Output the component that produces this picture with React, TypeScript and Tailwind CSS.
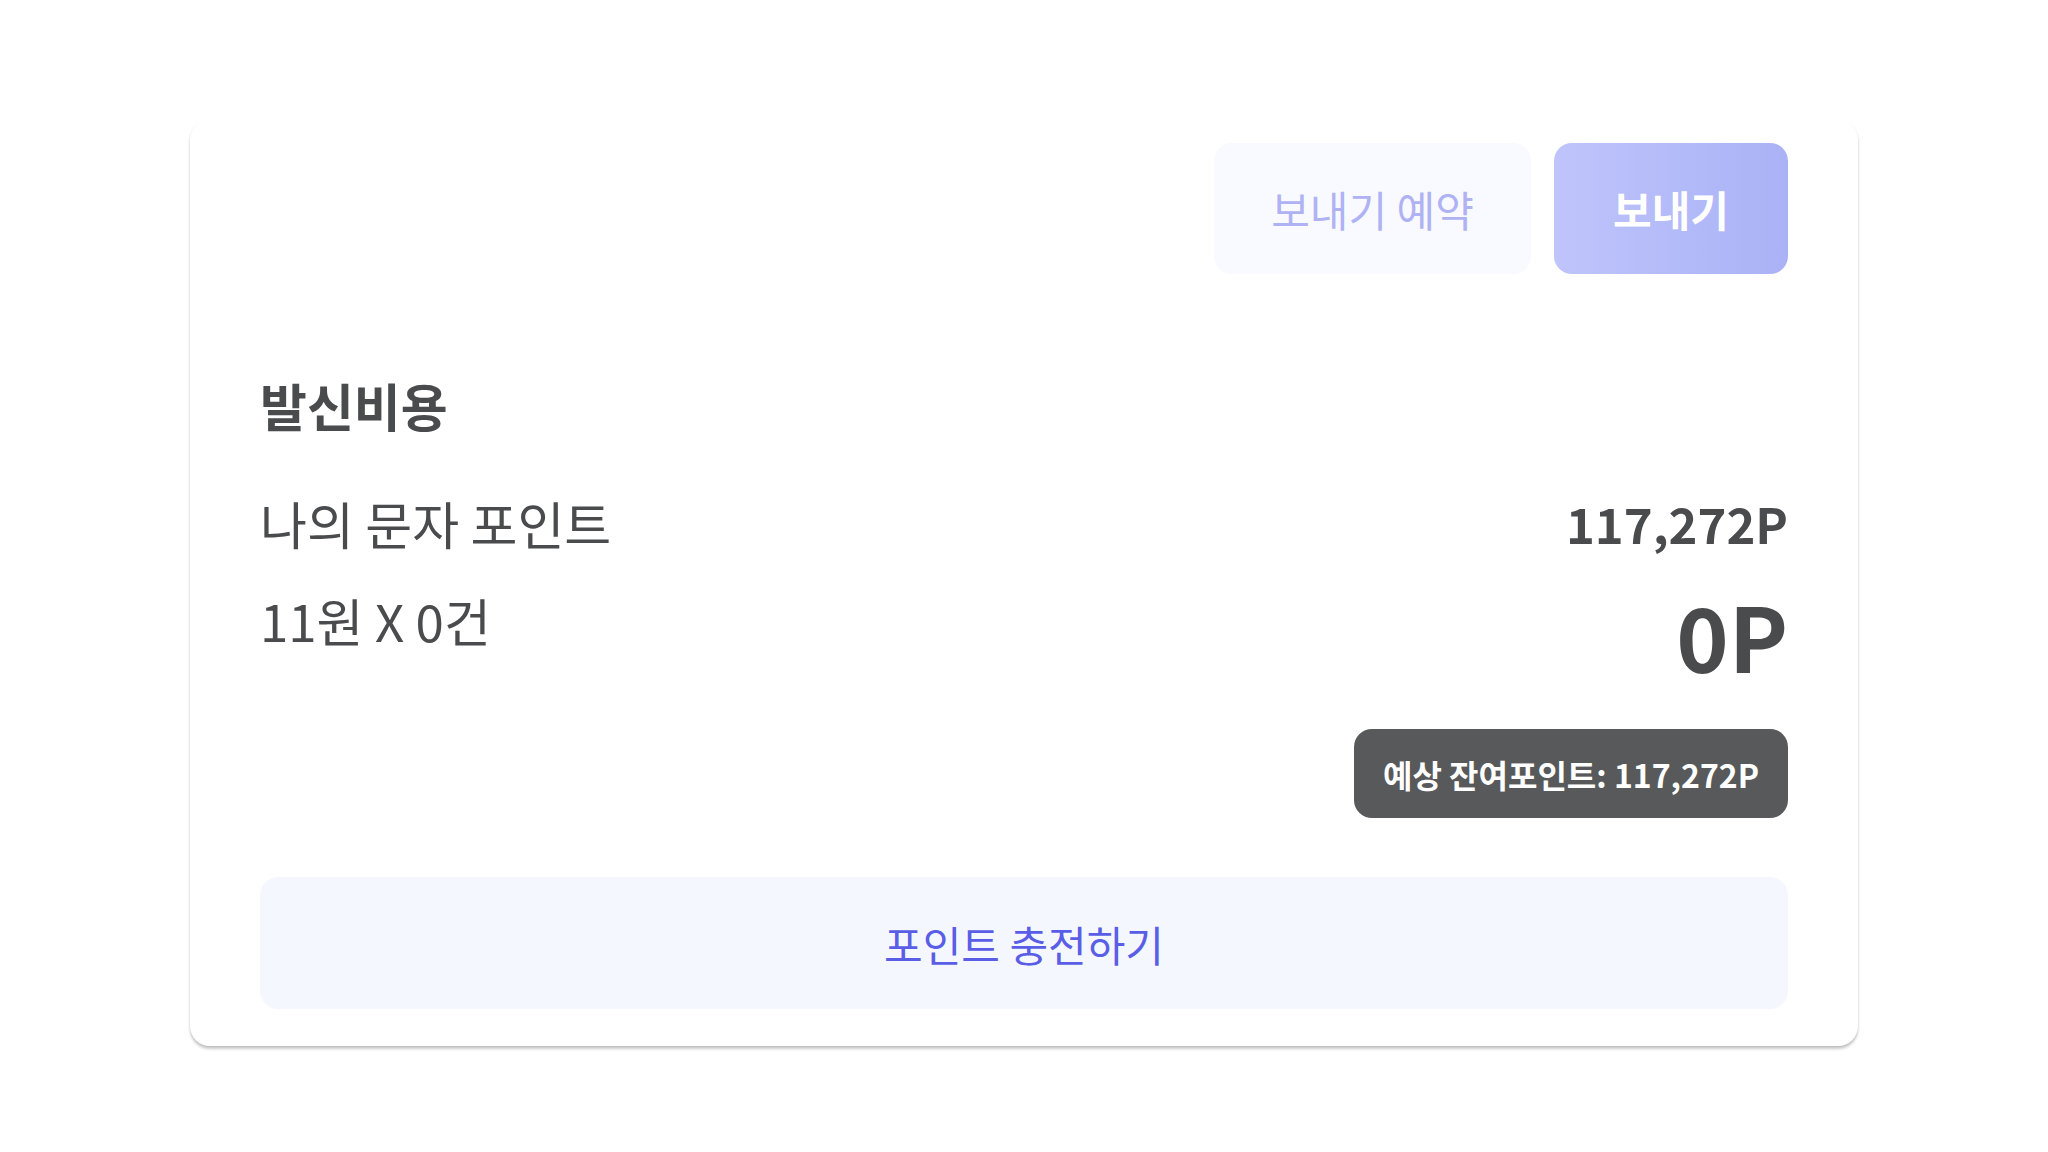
import React from 'react'

const font = { fontFamily: '"Noto Sans CJK KR", "Noto Sans", sans-serif' }

const App = () => {
    return (
        <div className="min-h-screen bg-white pt-[120px] px-[190px]" style={font}>
            <div className="w-[1668px] bg-white rounded-[20px] px-[70px] pt-[23px] pb-[37px] shadow-[0_3px_3px_rgba(0,0,0,0.2),0_1px_2px_rgba(0,0,0,0.08)]">
                {/* send buttons */}
                <div className="flex justify-end gap-[23px]">
                    <button className="w-[317px] h-[131px] rounded-[18px] bg-[#f9faff] text-[#afb3f3] text-[42px]">
                        보내기 예약
                    </button>
                    <button className="w-[234px] h-[131px] rounded-[18px] bg-gradient-to-r from-[#bfc4fb] to-[#aab2f6] text-white font-bold text-[42px]">
                        보내기
                    </button>
                </div>

                {/* cost */}
                <p className="mt-[105px] text-[51px] leading-[53px] font-bold text-[#4a4b4d]">발신비용</p>

                <div className="mt-[61px] flex h-[60px] items-center justify-between text-[#4a4b4d]">
                    <p className="text-[51px] leading-[60px]">나의 문자 포인트</p>
                    <p className="text-[49px] leading-[60px] font-bold">117,272P</p>
                </div>

                <div className="mt-[37px] flex items-start justify-between text-[#4a4b4d]">
                    <p className="mt-[6px] text-[51px] leading-[48px]">11원 X 0건</p>
                    <p className="text-[89px] leading-none font-bold">0P</p>
                </div>

                <div className="mt-[50px] flex justify-end">
                    <div className="h-[89px] px-[29px] flex items-center rounded-[18px] bg-[#58595b] text-white text-[32px] font-bold">
                        예상 잔여포인트: 117,272P
                    </div>
                </div>

                <button className="mt-[59px] w-full h-[132px] rounded-[18px] bg-[#f5f7fe] text-[#5a5ee6] text-[42px]">
                    포인트 충전하기
                </button>
            </div>
        </div>
    )
}

export default App
